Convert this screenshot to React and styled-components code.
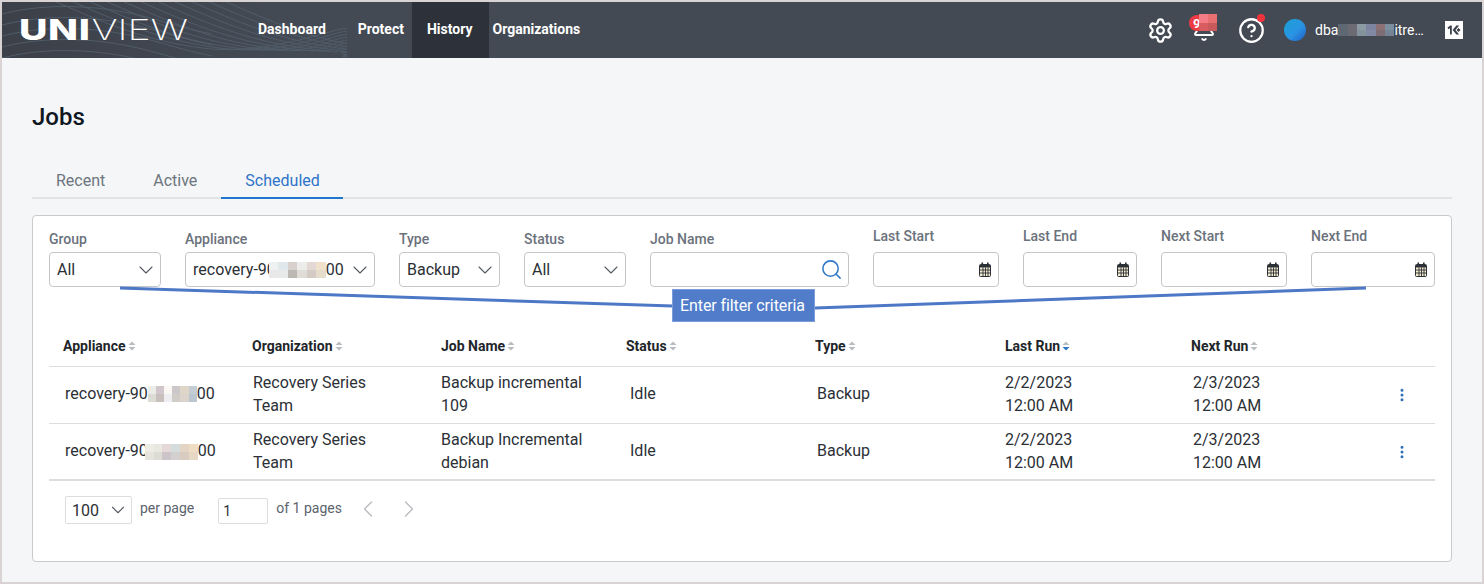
import * as React from 'react';
import styled, { createGlobalStyle } from 'styled-components';
import { Settings, Bell, CircleHelp, Search, ChevronDown, ChevronLeft, ChevronRight, EllipsisVertical } from 'lucide-react';

const GlobalStyle = createGlobalStyle`
  html, body {
    margin: 0;
    padding: 0;
    background: #f5f6f8;
  }
  * {
    box-sizing: border-box;
  }
  body {
    font-family: Roboto, "Liberation Sans", sans-serif;
    color: #212529;
  }
`;

const Frame = styled.div`
  width: 1484px;
  height: 584px;
  border: 2px solid #d9d3d3;
  background: #f5f6f8;
  overflow: hidden;
`;

const HeaderElem = styled.header`
  position: relative;
  display: flex;
  align-items: stretch;
  height: 56px;
  background: #444a54;
  color: #fff;
`;

const Waves = styled.svg`
  position: absolute;
  left: 0;
  top: 0;
`;

const Logo = styled.div`
  position: relative;
  width: 240px;
  padding-left: 17px;
  font-family: Inter, "Liberation Sans", sans-serif;
  font-size: 28px;
  line-height: 56px;
  white-space: nowrap;
  transform: scaleX(1.4);
  transform-origin: 17px 0;
  > b {
    font-weight: 800;
    letter-spacing: 0.4px;
  }
  > span {
    font-weight: 200;
    letter-spacing: 0;
    margin-left: 1px;
  }
`;

const Nav = styled.nav`
  position: relative;
  display: flex;
  margin-left: 16px;
`;

const NavItem = styled.a`
  display: flex;
  align-items: center;
  height: 56px;
  padding-bottom: 2px;
  padding-left: ${p => (p.$active ? 15 : 0)}px;
  padding-right: ${p => (p.$active ? 16 : 0)}px;
  font-size: 14px;
  font-weight: 700;
  color: #fff;
  margin-right: ${p => p.$gap || 0}px;
  background: ${p => (p.$active ? '#2d3139' : 'transparent')};
`;

const UserSection = styled.div`
  position: relative;
  display: flex;
  align-items: center;
  margin-left: auto;
  padding-right: 19px;
`;

const IconSlot = styled.span`
  position: relative;
  display: flex;
  color: #fff;
  margin-right: ${p => p.$gap}px;
`;

const BellBadge = styled.span`
  position: absolute;
  left: -3px;
  top: -3px;
  display: flex;
  align-items: center;
  width: 28px;
  height: 16px;
  border-radius: 8px;
  background: #ee3b43;
  color: #fff;
  font-size: 13px;
  font-weight: 700;
  padding-left: 4px;
`;

const BadgeBlur = styled.span`
  position: absolute;
  left: 10px;
  top: -1px;
  display: flex;
`;

const HelpDot = styled.span`
  position: absolute;
  right: 0;
  top: -3px;
  width: 8px;
  height: 8px;
  border-radius: 50%;
  background: #f0343c;
`;

const Avatar = styled.span`
  width: 22px;
  height: 22px;
  border-radius: 50%;
  margin-right: 9px;
  background: linear-gradient(135deg, #1aa0d4 0%, #2a94e4 55%, #1f5ec6 100%);
`;

const UserName = styled.span`
  display: flex;
  align-items: center;
  width: 130px;
  font-size: 14px;
  color: #fff;
  white-space: nowrap;
`;

const BrandMark = styled.span`
  display: flex;
  align-items: center;
  justify-content: center;
  width: 18px;
  height: 18px;
  background: #fff;
`;

const Mosaic = styled.span`
  display: inline-grid;
  grid-template-columns: repeat(${p => p.$cols}, 1fr);
  grid-auto-rows: 1fr;
  width: ${p => p.$w}px;
  height: ${p => p.$h}px;
  margin-left: ${p => -(p.$overlap || 0)}px;
  vertical-align: middle;
  flex: none;
`;

const Cell = styled.span`
  background: ${p => p.$c};
`;

function Blur({ w, h, colors, overlap }) {
  const cols = colors.length / 2;
  return (
    <Mosaic $cols={cols} $w={w} $h={h} $overlap={overlap}>
      {colors.map((c, i) => <Cell key={i} $c={c} />)}
    </Mosaic>
  );
}

const Main = styled.main`
  padding: 0 30px;
`;

const Title = styled.h1`
  margin: 0;
  padding-top: 44px;
  height: 106px;
  font-size: 24px;
  line-height: 30px;
  font-weight: 500;
  color: #101722;
`;

const Tabs = styled.div`
  display: flex;
  height: 35px;
  border-bottom: 2px solid #e2e3e5;
`;

const Tab = styled.div`
  height: 35px;
  padding: 0 ${p => (p.$active ? 23 : 24)}px 0 24px;
  font-size: 16px;
  line-height: 33px;
  color: ${p => (p.$active ? '#2e74c9' : '#6c757d')};
  border-bottom: 2px solid ${p => (p.$active ? '#2176d2' : 'transparent')};
`;

const Card = styled.section`
  position: relative;
  height: 347px;
  margin-top: 16px;
  padding: 0 16px;
  background: #fff;
  border: 1px solid #c9cacc;
  border-radius: 4px;
`;

const Filters = styled.div`
  display: flex;
  gap: 24px;
  height: 71px;
  align-items: flex-end;
`;

const Field = styled.label`
  display: flex;
  flex-direction: column;
  width: ${p => p.$w}px;
`;

const FieldLabel = styled.span`
  font-size: 14px;
  font-weight: 500;
  line-height: 16px;
  color: #6b727c;
  margin-bottom: ${p => (p.$raised ? 8 : 5)}px;
`;

const Control = styled.div`
  display: flex;
  align-items: center;
  justify-content: space-between;
  height: 35px;
  padding: 0 ${p => p.$pr}px 0 7px;
  background: #fff;
  border: 1px solid #c4c6c9;
  border-radius: 4px;
  font-size: 16px;
  color: #2b3036;
  white-space: nowrap;
  overflow: hidden;
  > svg {
    flex: none;
  }
`;

const ControlValue = styled.span`
  display: flex;
  align-items: center;
`;

const Callout = styled.div`
  position: absolute;
  left: 639px;
  top: 73px;
  width: 143px;
  height: 33px;
  padding-right: 2px;
  background: #507cca;
  border: 1px solid #7b9cd8;
  color: #fff;
  font-size: 16px;
  letter-spacing: -0.1px;
  line-height: 31px;
  text-align: center;
`;

const CalloutLines = styled.svg`
  position: absolute;
  left: 0;
  top: 0;
  pointer-events: none;
`;

const Table = styled.div`
  margin-top: 29px;
`;

const Row = styled.div`
  display: grid;
  grid-template-columns: 189px 189px 185px 189px 190px 186px 1fr;
  height: ${p => (p.$head ? 51 : 57)}px;
  border-bottom: ${p => (p.$last ? 2 : 1)}px solid #dcdddf;
`;

const HeadCell = styled.div`
  display: flex;
  align-items: center;
  gap: 2px;
  padding-left: ${p => p.$pad}px;
  padding-top: 10px;
  font-size: 14px;
  font-weight: 700;
  color: #22262b;
`;

const SortIcon = styled.svg`
  flex: none;
`;

const BodyCell = styled.div`
  display: flex;
  align-items: center;
  padding-left: ${p => p.$pad}px;
  padding-bottom: ${p => p.$lift || 0}px;
  font-size: 16px;
  line-height: 23px;
  color: #2b3036;
`;

const RowMenu = styled.span`
  display: flex;
  margin-left: auto;
  padding: 2px 25px 0 0;
  color: #2c6fb4;
`;

const Pager = styled.div`
  display: flex;
  align-items: center;
  padding: 14px 0 0 16px;
  color: #5b636d;
  font-size: 14px;
`;

const PagerText = styled.span`
  padding-bottom: 5px;
`;

const PageSize = styled.div`
  display: flex;
  align-items: center;
  justify-content: space-between;
  width: 67px;
  height: 28px;
  padding: 0 2px 0 6px;
  margin-right: 8px;
  border: 1px solid #dcdddf;
  border-radius: 2px;
  font-size: 16px;
  color: #2b3036;
`;

const PageInput = styled.div`
  width: 50px;
  height: 26px;
  margin: 2px 8px 0 24px;
  padding-left: 4px;
  border: 1px solid #dcdddf;
  border-radius: 2px;
  font-size: 14px;
  line-height: 24px;
  color: #2b3036;
`;

const PagerButton = styled.span`
  display: flex;
  color: #b9bcc0;
  margin-left: ${p => p.$gap}px;
  margin-bottom: 2px;
`;

function CalendarIcon() {
  return (
    <svg width="12" height="15" viewBox="0 0 12 15">
      <rect x="2.5" y="0.5" width="1.6" height="3" fill="#2b3036" />
      <rect x="8" y="0.5" width="1.6" height="3" fill="#2b3036" />
      <rect x="0.5" y="2.5" width="11" height="12" rx="1" fill="#f6ecd0" stroke="#2b3036" />
      <rect x="1" y="3" width="10" height="2.5" fill="#2b3036" />
      <path d="M1 8h10M1 11h10M4 5.5v9M6.5 5.5v9M9 5.5v9" stroke="#2b3036" strokeWidth="0.9" />
    </svg>
  );
}

function SortArrows({ active }) {
  return (
    <SortIcon width="8" height="10" viewBox="0 0 8 10">
      <path d="M4 0.5L7.5 4H0.5z" fill="#b9bcc0" />
      <path d="M4 9.5L0.5 6h7z" fill={active ? '#2e74c9' : '#b9bcc0'} />
    </SortIcon>
  );
}

const filterBlur = ['#eef1f1', '#e0e8ec', '#d8d0cc', '#ececea', '#e4d8d4', '#f0e0cc', '#e8e8e8', '#e8eaea', '#bcb8b4', '#e0dcd8', '#d4ccc4', '#e6dccc'];
const rowOneBlur = ['#ecece6', '#d0c6cc', '#fbf8f4', '#ccc8ca', '#e0d6c8', '#c4ccd4', '#dcdcd4', '#c8c0bc', '#eeeef2', '#d0ccc8', '#dcd4cc', '#bcc6d0'];
const rowTwoBlur = ['#ecece4', '#e8e8e0', '#e4d8d8', '#d4dcdc', '#e4d4c4', '#eedcc4', '#e4e4dc', '#dcdcd4', '#ccc4c8', '#d4d0d0', '#d8ccc0', '#e6d8c4'];
const userBlur = ['#5e6872', '#6c6a72', '#8c9aa4', '#7c84a0', '#8c7074', '#7a8ea0', '#5e6872', '#6c6a72', '#84929c', '#808aa4', '#7c6c74', '#748494'];
const badgeBlur = ['#f47c86', '#e87070', '#d85c60', '#c85a5c'];

const columns = [
  ['Appliance', 14],
  ['Organization', 14],
  ['Job Name', 14],
  ['Status', 14],
  ['Type', 14],
  ['Last Run', 14, true],
  ['Next Run', 14]
];

const rows = [
  { blur: rowOneBlur, w: 49, overlap: 0, job: ['Backup incremental', '109'] },
  { blur: rowTwoBlur, w: 53, overlap: 3, job: ['Backup Incremental', 'debian'] }
];

function JobRow({ row, last }) {
  const singleLift = last ? 2 : 4;
  return (
    <Row $last={last}>
      <BodyCell $pad={16} $lift={singleLift}>
        <span>recovery-90<Blur w={row.w} h={16} colors={row.blur} overlap={row.overlap} />00</span>
      </BodyCell>
      <BodyCell $pad={15} $lift={2}>Recovery Series<br />Team</BodyCell>
      <BodyCell $pad={14} $lift={2}>{row.job[0]}<br />{row.job[1]}</BodyCell>
      <BodyCell $pad={18} $lift={singleLift}>Idle</BodyCell>
      <BodyCell $pad={16} $lift={singleLift}>Backup</BodyCell>
      <BodyCell $pad={14} $lift={2}>2/2/2023<br />12:00 AM</BodyCell>
      <BodyCell $pad={16} $lift={2}>
        <span>2/3/2023<br />12:00 AM</span>
        <RowMenu>
          <EllipsisVertical size={16} strokeWidth={2.5} />
        </RowMenu>
      </BodyCell>
    </Row>
  );
}

function WaveBackground() {
  const lines = [];
  for (let i = 0; i < 11; i++) {
    const o = 50 + i * 17;
    lines.push(<path key={i} d={`M${o} -2 C ${o + 50} 20, ${o + 90} 38, ${o + 150} 46 S 320 ${30 + i * 3}, 345 ${26 + i * 3}`} />);
  }
  for (let i = 0; i < 5; i++) {
    const y = 8 + i * 11;
    lines.push(<path key={`h${i}`} d={`M0 ${y + 4} C 30 ${y - 4}, 70 ${y - 6}, 110 ${y} S 170 ${y + 16}, 210 ${y + 24}`} />);
  }
  return (
    <Waves width="345" height="56" viewBox="0 0 345 56" fill="none" stroke="#505c69" strokeWidth="1">
      <defs>
        <linearGradient id="fade" x1="0" x2="1" y1="0" y2="0">
          <stop offset="0" stopColor="#3b4049" />
          <stop offset="0.8" stopColor="#444a54" />
          <stop offset="1" stopColor="#444a54" />
        </linearGradient>
      </defs>
      <rect width="345" height="56" fill="url(#fade)" stroke="none" />
      {lines}
    </Waves>
  );
}

function Header() {
  return (
    <HeaderElem>
      <WaveBackground />
      <Logo><b>UNI</b><span>VIEW</span></Logo>
      <Nav>
        <NavItem $gap={32}>Dashboard</NavItem>
        <NavItem $gap={8}>Protect</NavItem>
        <NavItem $active $gap={4}>History</NavItem>
        <NavItem>Organizations</NavItem>
      </Nav>
      <UserSection>
        <IconSlot $gap={18}><Settings size={27} strokeWidth={2} /></IconSlot>
        <IconSlot $gap={22}>
          <Bell size={24} strokeWidth={2} />
          <BellBadge>
            9
            <BadgeBlur><Blur w={18} h={17} colors={badgeBlur} /></BadgeBlur>
          </BellBadge>
        </IconSlot>
        <IconSlot $gap={19}>
          <CircleHelp size={27} strokeWidth={2} />
          <HelpDot />
        </IconSlot>
        <Avatar />
        <UserName>
          dba<Blur w={56} h={12} colors={userBlur} />itre…
        </UserName>
        <BrandMark>
          <svg width="14" height="10" viewBox="0 0 14 10">
            <path d="M0.5 2.6L3.4 0.6h1.4v8.8H3V3.2L1.3 4.2zM5.6 5L9.4 0.6h2.8L8.4 5l3.8 4.4H9.4zM9.6 5L11.4 3 13.6 5l-2.2 2z" fill="#3a3f48" />
          </svg>
        </BrandMark>
      </UserSection>
    </HeaderElem>
  );
}

function Select({ value }) {
  return (
    <Control $pr={2}>
      <ControlValue>{value}</ControlValue>
      <ChevronDown size={24} strokeWidth={1.1} color="#555b63" />
    </Control>
  );
}

function DateField({ label, w }) {
  return (
    <Field $w={w}>
      <FieldLabel $raised>{label}</FieldLabel>
      <Control $pr={7}><span /><CalendarIcon /></Control>
    </Field>
  );
}

function FilterBar() {
  return (
    <Filters>
      <Field $w={112}>
        <FieldLabel>Group</FieldLabel>
        <Select value="All" />
      </Field>
      <Field $w={190}>
        <FieldLabel>Appliance</FieldLabel>
        <Select value={<>recovery-90<Blur w={57} h={16} colors={filterBlur} overlap={7} />00</>} />
      </Field>
      <Field $w={101}>
        <FieldLabel>Type</FieldLabel>
        <Select value="Backup" />
      </Field>
      <Field $w={102}>
        <FieldLabel>Status</FieldLabel>
        <Select value="All" />
      </Field>
      <Field $w={199}>
        <FieldLabel>Job Name</FieldLabel>
        <Control $pr={5}>
          <span />
          <Search size={23} strokeWidth={1.6} color="#2f7ac8" />
        </Control>
      </Field>
      <DateField label="Last Start" w={126} />
      <DateField label="Last End" w={114} />
      <DateField label="Next Start" w={126} />
      <DateField label="Next End" w={124} />
    </Filters>
  );
}

export default function App() {
  return (
    <Frame>
      <GlobalStyle />
      <Header />
      <Main>
        <Title>Jobs</Title>
        <Tabs>
          <Tab>Recent</Tab>
          <Tab>Active</Tab>
          <Tab $active>Scheduled</Tab>
        </Tabs>
        <Card>
          <FilterBar />
          <Table>
            <Row $head>
              {columns.map(([name, pad, active]) => (
                <HeadCell key={name} $pad={pad}>{name}<SortArrows active={active} /></HeadCell>
              ))}
            </Row>
            {rows.map((row, i) => <JobRow key={i} row={row} last={i === rows.length - 1} />)}
          </Table>
          <Pager>
            <PageSize>100<ChevronDown size={22} strokeWidth={1.2} color="#555b63" /></PageSize>
            <PagerText>per page</PagerText>
            <PageInput>1</PageInput>
            <PagerText>of 1 pages</PagerText>
            <PagerButton $gap={12}><ChevronLeft size={28} strokeWidth={1.2} /></PagerButton>
            <PagerButton $gap={13}><ChevronRight size={28} strokeWidth={1.2} /></PagerButton>
          </Pager>
          <CalloutLines width="1418" height="120" viewBox="0 0 1418 120" fill="none" stroke="#4d78c6" strokeWidth="3">
            <path d="M87 72L640 90" />
            <path d="M782 92L1333 72" />
          </CalloutLines>
          <Callout>Enter filter criteria</Callout>
        </Card>
      </Main>
    </Frame>
  );
}
